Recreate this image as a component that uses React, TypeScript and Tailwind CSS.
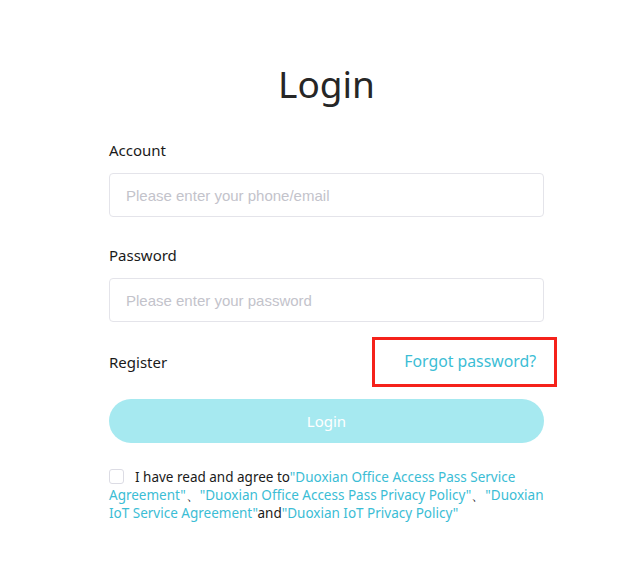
import React, { useState } from 'react';

const link = "text-[#3bbdd5]";

export default function App() {
  const [agree, setAgree] = useState(false);

  return (
    <div className="min-h-screen bg-white font-['Noto_Sans','Liberation_Sans',sans-serif]">
      <div className="ml-[109px] w-[435px] pt-[56px]">
        <h1 className="text-center text-[37px] leading-[56px] text-[#262626]">Login</h1>

        <div className="mt-[27px]">
          <label className="block text-[15px] leading-[22px] text-[#1a1a1a]">Account</label>
          <input
            className="mt-[12px] block h-[44px] w-full rounded-[4px] border border-[#e4e4ea] px-[16px] font-['Liberation_Sans',sans-serif] text-[15px] outline-none placeholder:text-[#c3c3cb]"
            placeholder="Please enter your phone/email"
          />
        </div>

        <div className="mt-[27px]">
          <label className="block text-[15px] leading-[22px] text-[#1a1a1a]">Password</label>
          <input
            type="password"
            className="mt-[12px] block h-[44px] w-full rounded-[4px] border border-[#e4e4ea] px-[16px] font-['Liberation_Sans',sans-serif] text-[15px] outline-none placeholder:text-[#c3c3cb]"
            placeholder="Please enter your password"
          />
        </div>

        <div className="mt-[15px] flex items-center justify-between">
          <span className="text-[15px] text-[#1a1a1a]">Register</span>
          <div className="-mr-[13px] flex h-[50px] w-[185px] items-center justify-end border-[3px] border-[#f5221b] pr-[18px]">
            <span className={`text-[15.8px] ${link}`}>Forgot password?</span>
          </div>
        </div>

        <button className="mt-[12px] block h-[44px] w-full rounded-full bg-[#a6e9f0] text-[15px] text-white">
          Login
        </button>

        <div className="mt-[24px] text-[13.5px] leading-[18px] text-[#1a1a1a]">
          <span
            onClick={() => setAgree(!agree)}
            className={`mr-[11px] inline-block h-[15px] w-[15px] translate-y-[2px] rounded-[3px] border border-[#dcdce4] ${agree ? 'bg-[#3bbdd5]' : 'bg-white'}`}
          />
          I have read and agree to
          <span className={link}>"Duoxian Office Access Pass Service Agreement"</span>、
          <span className={link}>"Duoxian Office Access Pass Privacy Policy"</span>、
          <span className={link}>"Duoxian IoT Service Agreement"</span>and
          <span className={link}>"Duoxian IoT Privacy Policy"</span>
        </div>
      </div>
    </div>
  );
}
